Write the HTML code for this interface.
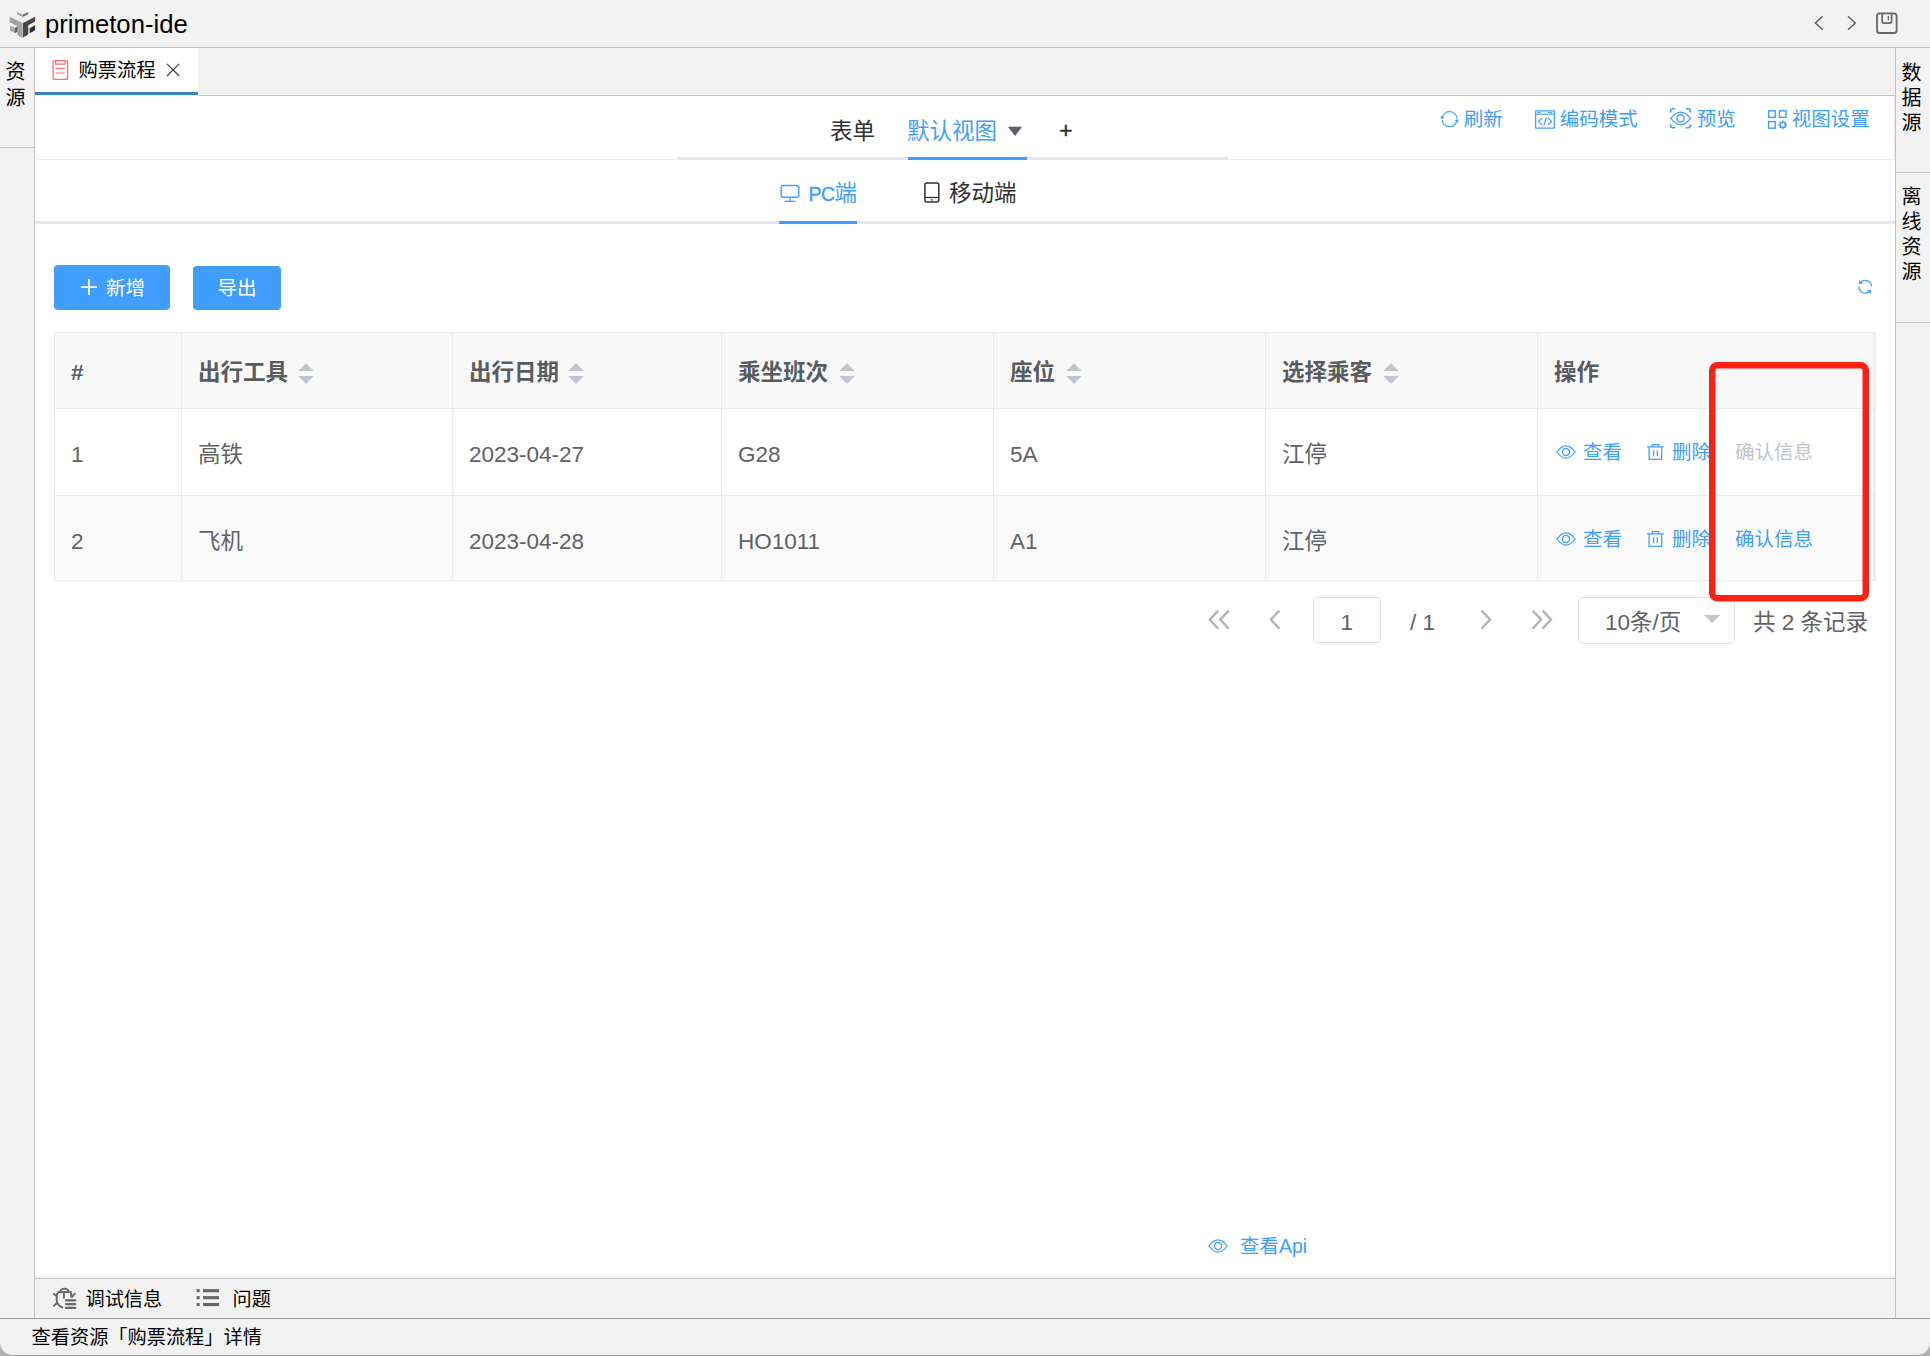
<!DOCTYPE html>
<html lang="zh-CN">
<head>
<meta charset="utf-8">
<title>primeton-ide</title>
<style>
html,body{margin:0;padding:0;}
body{width:1930px;height:1356px;overflow:hidden;background:#f2f2f2;font-family:"Liberation Sans","Noto Sans CJK SC",sans-serif;color:#000;}
#app{position:relative;width:1930px;height:1356px;overflow:hidden;background:#f2f2f2;}
.a{position:absolute;}
.t{position:absolute;white-space:nowrap;line-height:1;}
.ln{position:absolute;background:#c9c9c9;}
.blue{color:#409eff;}
svg{position:absolute;overflow:visible;}
/* table */
.cell{position:absolute;white-space:nowrap;line-height:1;font-size:22.5px;color:#606266;}
.hd{font-weight:bold;color:#595b5f;}
</style>
</head>
<body>
<div id="app">

<!-- ===== title bar ===== -->
<div class="ln" style="left:0;top:47px;width:1930px;height:1px;background:#c2c2c2"></div>
<div class="t" style="left:45px;top:11.7px;font-size:25.7px;color:#000;">primeton-ide</div>

<!-- ===== left sidebar ===== -->
<div class="ln" style="left:34px;top:48px;width:1px;height:1270px;background:#c2c2c2"></div>
<div class="t" style="left:5.6px;top:60px;font-size:20px;line-height:25.5px;width:20px;white-space:normal;">资源</div>
<div class="ln" style="left:0;top:147px;width:34px;height:1px;background:#c8c8c8"></div>

<!-- ===== right sidebar ===== -->
<div class="ln" style="left:1895px;top:48px;width:1px;height:1270px;background:#c2c2c2"></div>
<div class="t" style="left:1901.4px;top:60.5px;font-size:20px;line-height:25px;width:20px;white-space:normal;">数据源</div>
<div class="ln" style="left:1896px;top:172px;width:34px;height:1px;background:#c8c8c8"></div>
<div class="t" style="left:1901.4px;top:184.5px;font-size:20px;line-height:25px;width:20px;white-space:normal;">离线资源</div>
<div class="ln" style="left:1896px;top:322px;width:34px;height:1px;background:#c8c8c8"></div>

<!-- ===== editor tab strip ===== -->
<div class="a" style="left:35px;top:48px;width:163px;height:44px;background:#fff"></div>
<div class="a" style="left:35px;top:92px;width:163px;height:3px;background:#3b7fc9"></div>
<div class="ln" style="left:198px;top:95px;width:1697px;height:1px;background:#c6c6c6"></div>
<div class="t" style="left:78.4px;top:60.8px;font-size:19.3px;">购票流程</div>

<!-- ===== main white area ===== -->
<div class="a" id="main" style="left:35px;top:96px;width:1860px;height:1180px;background:#fff"></div>

<div class="a" style="left:35px;top:159px;width:1860px;height:1px;background:#f7e9ec"></div>
<div class="a" style="left:1894px;top:96px;width:1px;height:63px;background:#f7e9ec"></div>
<!-- view tabs -->
<div class="t" style="left:830px;top:120.5px;font-size:22.5px;color:#303133;">表单</div>
<div class="t blue" style="left:907px;top:120.5px;font-size:22.5px;">默认视图</div>
<div class="t" style="left:1059.3px;top:120.2px;font-size:22.5px;color:#303133;-webkit-text-stroke:0.45px #303133;">+</div>
<div class="a" style="left:677px;top:157px;width:551px;height:3px;background:#e4e7ed"></div>
<div class="a" style="left:908px;top:157px;width:119px;height:3px;background:#409eff"></div>

<!-- right toolbar -->
<div class="t blue" style="left:1463.7px;top:110.3px;font-size:19.5px;">刷新</div>
<div class="t blue" style="left:1559.7px;top:110.3px;font-size:19.5px;">编码模式</div>
<div class="t blue" style="left:1696.7px;top:110.3px;font-size:19.5px;">预览</div>
<div class="t blue" style="left:1791.8px;top:110.3px;font-size:19.5px;">视图设置</div>

<!-- device tabs -->
<div class="t blue" style="left:808.5px;top:183px;font-size:22.5px;"><span style="font-size:19.5px;letter-spacing:-0.6px;-webkit-text-stroke:0.35px #409eff">PC</span>端</div>
<div class="t" style="left:949px;top:183px;font-size:22.5px;color:#303133;">移动端</div>
<div class="a" style="left:35px;top:221px;width:1860px;height:3px;background:#e4e7ed"></div>
<div class="a" style="left:779px;top:221px;width:78px;height:3px;background:#409eff"></div>

<!-- buttons -->
<div class="a" style="left:54px;top:265px;width:116px;height:45px;background:#409eff;border-radius:4px"></div>
<div class="t" style="left:106px;top:278.7px;font-size:19.5px;color:#fff;">新增</div>
<div class="a" style="left:193px;top:266px;width:88px;height:44px;background:#409eff;border-radius:4px"></div>
<div class="t" style="left:217.600px;top:278.7px;font-size:19.5px;color:#fff;">导出</div>

<!-- table -->
<div class="a" style="left:54px;top:332px;width:1822px;height:77px;background:#f8f8f9"></div>
<div class="a" style="left:54px;top:409px;width:1822px;height:86px;background:#fff"></div>
<div class="a" style="left:54px;top:496px;width:1822px;height:85px;background:#fafafa"></div>
<div class="a" style="left:1873px;top:332px;width:3px;height:249px;background:#eeeff1"></div>
<div class="a" style="left:54px;top:332px;width:1822px;height:1px;background:#e8eaec"></div>
<div class="a" style="left:54px;top:408px;width:1822px;height:1px;background:#e8eaec"></div>
<div class="a" style="left:54px;top:495px;width:1822px;height:1px;background:#e8eaec"></div>
<div class="a" style="left:54px;top:580px;width:1822px;height:1px;background:#e8eaec"></div>
<div class="a" style="left:54px;top:332px;width:1px;height:249px;background:#e8eaec"></div>
<div class="a" style="left:181px;top:332px;width:1px;height:249px;background:#e8eaec"></div>
<div class="a" style="left:452px;top:332px;width:1px;height:249px;background:#e8eaec"></div>
<div class="a" style="left:721px;top:332px;width:1px;height:249px;background:#e8eaec"></div>
<div class="a" style="left:993px;top:332px;width:1px;height:249px;background:#e8eaec"></div>
<div class="a" style="left:1265px;top:332px;width:1px;height:249px;background:#e8eaec"></div>
<div class="a" style="left:1537px;top:332px;width:1px;height:249px;background:#e8eaec"></div>
<div class="cell hd" style="left:71px;top:362px;">#</div>
<div class="cell hd" style="left:198px;top:362px;">出行工具</div>
<div class="cell hd" style="left:469px;top:362px;">出行日期</div>
<div class="cell hd" style="left:738px;top:362px;">乘坐班次</div>
<div class="cell hd" style="left:1010px;top:362px;">座位</div>
<div class="cell hd" style="left:1282px;top:362px;">选择乘客</div>
<div class="cell hd" style="left:1554px;top:362px;">操作</div>
<svg style="left:298px;top:363px" width="16" height="22" viewBox="0 0 16 22"><path d="M0.2 7.9 L8 0.3 L15.800 7.9 Z M0.2 13.1 L15.800 13.1 L8 20.900 Z" fill="#c0c4cc"/></svg>
<svg style="left:568px;top:363px" width="16" height="22" viewBox="0 0 16 22"><path d="M0.2 7.9 L8 0.3 L15.800 7.9 Z M0.2 13.1 L15.800 13.1 L8 20.900 Z" fill="#c0c4cc"/></svg>
<svg style="left:839px;top:363px" width="16" height="22" viewBox="0 0 16 22"><path d="M0.2 7.9 L8 0.3 L15.800 7.9 Z M0.2 13.1 L15.800 13.1 L8 20.900 Z" fill="#c0c4cc"/></svg>
<svg style="left:1066px;top:363px" width="16" height="22" viewBox="0 0 16 22"><path d="M0.2 7.9 L8 0.3 L15.800 7.9 Z M0.2 13.1 L15.800 13.1 L8 20.900 Z" fill="#c0c4cc"/></svg>
<svg style="left:1383px;top:363px" width="16" height="22" viewBox="0 0 16 22"><path d="M0.2 7.9 L8 0.3 L15.800 7.9 Z M0.2 13.1 L15.800 13.1 L8 20.900 Z" fill="#c0c4cc"/></svg>
<div class="cell" style="left:71px;top:443.7px;">1</div>
<div class="cell" style="left:198px;top:443.7px;">高铁</div>
<div class="cell" style="left:469px;top:443.7px;">2023-04-27</div>
<div class="cell" style="left:738px;top:443.7px;">G28</div>
<div class="cell" style="left:1010px;top:443.7px;">5A</div>
<div class="cell" style="left:1282px;top:443.7px;">江停</div>
<div class="cell" style="left:71px;top:530.7px;">2</div>
<div class="cell" style="left:198px;top:530.7px;">飞机</div>
<div class="cell" style="left:469px;top:530.7px;">2023-04-28</div>
<div class="cell" style="left:738px;top:530.7px;">HO1011</div>
<div class="cell" style="left:1010px;top:530.7px;">A1</div>
<div class="cell" style="left:1282px;top:530.7px;">江停</div>
<!-- actions -->
<div class="t blue" style="left:1583px;top:443.2px;font-size:19.5px;">查看</div>
<div class="t blue" style="left:1672px;top:443.2px;font-size:19.5px;">删除</div>
<div class="t" style="left:1735px;top:443.2px;font-size:19.5px;color:#c0c4cc;">确认信息</div>
<div class="t blue" style="left:1583px;top:530.2px;font-size:19.5px;">查看</div>
<div class="t blue" style="left:1672px;top:530.2px;font-size:19.5px;">删除</div>
<div class="t blue" style="left:1735px;top:530.2px;font-size:19.5px;">确认信息</div>


<!-- pager -->
<div class="a" style="left:1313px;top:597px;width:66px;height:44px;border:1px solid #dcdfe6;border-radius:5px;background:#fff"></div>
<div class="t" style="left:1340.6px;top:612px;font-size:22.5px;color:#606266;">1</div>
<div class="t" style="left:1410px;top:612px;font-size:22.5px;color:#606266;">/ 1</div>
<div class="a" style="left:1578px;top:596.5px;width:155px;height:45.5px;border:1px solid #dcdfe6;border-radius:6px;background:#fff"></div>
<div class="t" style="left:1605px;top:611.5px;font-size:22.5px;color:#606266;">10条/页</div>
<div class="t" style="left:1753px;top:611.5px;font-size:22.5px;color:#606266;">共 2 条记录</div>


<!-- view api -->
<div class="t blue" style="left:1240px;top:1237px;font-size:19.5px;">查看Api</div>

<!-- ===== bottom panel ===== -->
<div class="ln" style="left:35px;top:1278px;width:1860px;height:1px;background:#c4c4c4"></div>
<div class="t" style="left:85.5px;top:1289.9px;font-size:19.2px;">调试信息</div>
<div class="t" style="left:232.6px;top:1289.9px;font-size:19.2px;">问题</div>
<div class="a" style="left:0;top:1336px;width:1930px;height:20px;background:linear-gradient(to right,#b2b2b2 0,#b2b2b2 8px,#9c9c9c 16px,#9c9c9c 1914px,#b2b2b2 1922px,#b2b2b2 100%)"></div>
<div class="a" style="left:0;top:1319px;width:1930px;height:36.2px;background:#f2f2f2;border-radius:0 0 13px 13px"></div>
<div class="ln" style="left:0;top:1318px;width:1930px;height:1.2px;background:#9e9e9e"></div>
<div class="t" style="left:31.6px;top:1328.2px;font-size:19.2px;">查看资源「购票流程」详情</div>

<!-- ===== icons: title bar ===== -->
<svg style="left:0;top:0" width="60" height="48" viewBox="0 0 1695 1356">
<polygon points="630,262 1000,462 640,642 270,472" fill="#efefef"/>
<polygon points="480,338 640,418 640,482 480,400" fill="#a9a9a9"/>
<polygon points="640,418 792,338 792,400 640,482" fill="#6a6a6a"/>
<polygon points="275,475 640,650 640,1070 490,990 490,740 275,630" fill="#a3a3a3"/>
<polygon points="650,650 992,470 992,610 790,720 790,980 650,1062" fill="#474747"/>
<polygon points="280,718 350,690 490,750 420,790" fill="#ededed"/>
<polygon points="280,718 420,790 420,940 280,860" fill="#a6a6a6"/>
<polygon points="420,790 490,752 490,900 420,940" fill="#5e5e5e"/>
<polygon points="790,760 850,790 850,930 790,962" fill="#acacac"/>
<polygon points="850,790 992,710 992,858 850,930" fill="#2f2f2f"/>
</svg>
<svg style="left:1800px;top:0" width="130" height="48" viewBox="1800 0 130 48" fill="none" stroke-linecap="butt" stroke-linejoin="miter">
<path d="M1822.6 16.2 L1815.3 23 L1822.6 29.8" stroke="#555" stroke-width="1.3"/>
<path d="M1848 16.2 L1855.3 23 L1848 29.8" stroke="#555" stroke-width="1.3"/>
<rect x="1877" y="13.4" width="19.6" height="19.6" rx="2.6" stroke="#666" stroke-width="1.8"/>
<path d="M1882.2 13.4 V21 Q1882.2 23.2 1884.4 23.2 H1889.4 Q1891.6 23.2 1891.6 21 V13.4" stroke="#666" stroke-width="1.7"/>
<path d="M1888.3 15.8 V20.2" stroke="#666" stroke-width="1.3"/>
</svg>
<!-- tab icon + close -->
<svg style="left:48px;top:56px" width="140" height="30" viewBox="48 56 140 30" fill="none">
<rect x="53" y="60.6" width="14.6" height="18.8" rx="2" stroke="#f87070" stroke-width="1.3"/>
<path d="M55.6 60.6 V64.2 H65 V60.6" stroke="#f87070" stroke-width="1.2"/>
<path d="M56 68.4 H64.8 M56 73 H64.8" stroke="#f87070" stroke-width="1.2"/>
<path d="M167 63.8 L179.2 76 M179.2 63.8 L167 76" stroke="#444" stroke-width="1.2"/>
</svg>
<!-- ===== icons: toolbar ===== -->
<svg style="left:1430px;top:100px" width="460" height="40" viewBox="1430 100 460 40" fill="none" stroke="#409eff" stroke-width="1.3">
<!-- refresh -->
<path d="M1442.39 117.13 A7.5 7.5 0 0 1 1457.03 118.16"/>
<path d="M1456.81 121.27 A7.5 7.5 0 0 1 1442.17 120.24"/>
<path d="M1441.75 119.6 L1440.2 116.3 L1444.6 117.5 Z" fill="#409eff" stroke="none"/>
<path d="M1457.45 118.8 L1459 122.1 L1454.6 120.9 Z" fill="#409eff" stroke="none"/>
<!-- code -->
<rect x="1535.6" y="110.8" width="18.8" height="17.4" rx="0.5"/>
<path d="M1535.6 114.2 H1554.4" stroke-width="1.1"/>
<path d="M1537.4 112.5 H1540.6 M1548 112.5 H1552.4" stroke-width="1"/>
<path d="M1542 118 L1538.4 121.4 L1542 124.8 M1548 118 L1551.6 121.4 L1548 124.8 M1546.4 117.2 L1543.8 125.6" stroke-width="1.2"/>
<!-- preview -->
<path d="M1670.6 112.4 V111 Q1670.6 108.8 1672.8 108.8 H1675.2 M1685.800 108.8 H1688.2 Q1690.4 108.8 1690.4 111 V112.4 M1690.4 124.200 V125.6 Q1690.4 127.8 1688.2 127.8 H1685.8 M1675.2 127.8 H1672.8 Q1670.6 127.8 1670.6 125.6 V124.2" stroke-width="1.6"/>
<path d="M1670.8 118.4 Q1680.5 105.8 1690.4 118.4 Q1680.5 131 1670.8 118.4 Z" stroke-width="1.3"/>
<circle cx="1680.5" cy="118.4" r="3.6" stroke-width="1.4"/>
<!-- settings -->
<rect x="1768.6" y="110.8" width="6.6" height="6.6" stroke-width="1.4"/>
<rect x="1779.4" y="110.8" width="6.6" height="6.6" stroke-width="1.4"/>
<rect x="1768.6" y="121.6" width="6.6" height="6.6" stroke-width="1.4"/>
<circle cx="1782.8" cy="124.9" r="2.6" stroke-width="1.4"/>
<path d="M1782.8 120.6 V121.8 M1782.8 128 V129.2 M1778.5 124.9 H1779.7 M1785.9 124.9 H1787.1 M1779.8 121.9 L1780.6 122.7 M1785 127.100 L1785.8 127.9 M1785.800 121.9 L1785 122.7 M1780.600 127.1 L1779.8 127.9" stroke-width="1.6"/>
</svg>
<!-- view tab caret -->
<svg style="left:1000px;top:120px" width="30" height="20" viewBox="1000 120 30 20"><path d="M1008 126.8 H1022 L1015 136 Z" fill="#5a5e66"/></svg>
<!-- device icons -->
<svg style="left:775px;top:178px" width="170" height="30" viewBox="775 178 170 30" fill="none">
<rect x="781.2" y="185.500" width="17.6" height="11.8" rx="1.8" stroke="#409eff" stroke-width="1.4"/>
<path d="M790 197.3 V201.4 M784.800 201.4 H795.4" stroke="#409eff" stroke-width="1.4"/>
<rect x="924.9" y="183.1" width="13.9" height="18.8" rx="2" stroke="#303133" stroke-width="1.5"/>
<path d="M924.9 197.500 H938.8" stroke="#303133" stroke-width="1.3"/>
<circle cx="931.8" cy="199.800" r="0.9" fill="#303133"/>
</svg>
<!-- button plus + table refresh -->
<svg style="left:78px;top:275px" width="24" height="24" viewBox="78 275 24 24"><path d="M81.100 287.100 H97 M89 279.200 V295" stroke="#fff" stroke-width="1.9" fill="none"/></svg>
<svg style="left:1852px;top:275px" width="26" height="24" viewBox="1852 275 26 24" fill="none" stroke="#409eff" stroke-width="1.3">
<path d="M1860.62 282.58 A6.3 6.3 0 0 1 1871.60 286.58"/>
<path d="M1869.52 291.48 A6.3 6.3 0 0 1 1859.00 286.58"/>
<path d="M1859.100 280.100 V283.900 H1862.900 Z" fill="#409eff" stroke="none"/>
<path d="M1867.200 290.200 L1871 289.700 L1870.900 293.900 Z" fill="#409eff" stroke="none"/>
</svg>
<!-- ===== action icons ===== -->
<svg style="left:1553.6px;top:441.7px" width="24" height="20" viewBox="-12 -10 24 20" fill="none" stroke="#409eff" stroke-width="1.25"><path d="M-9 0 Q0 -12.200 9 0 Q0 12.200 -9 0 Z"/><circle cx="0" cy="0" r="3.6"/></svg>
<svg style="left:1645.1px;top:442px" width="22" height="22" viewBox="-2 -2 22 22" fill="none" stroke="#409eff" stroke-width="1.25"><path d="M0 2.800 H16.800 M5.300 2.800 V0.600 H11.700 V2.800 M2.100 2.800 V15.400 H14.700 V2.800 M6.600 6.200 V12.200 M10.300 6.200 V12.200"/></svg>
<svg style="left:1553.6px;top:528.7px" width="24" height="20" viewBox="-12 -10 24 20" fill="none" stroke="#409eff" stroke-width="1.25"><path d="M-9 0 Q0 -12.200 9 0 Q0 12.200 -9 0 Z"/><circle cx="0" cy="0" r="3.6"/></svg>
<svg style="left:1645.1px;top:529px" width="22" height="22" viewBox="-2 -2 22 22" fill="none" stroke="#409eff" stroke-width="1.25"><path d="M0 2.800 H16.800 M5.300 2.800 V0.600 H11.700 V2.800 M2.100 2.800 V15.400 H14.700 V2.800 M6.600 6.200 V12.200 M10.300 6.200 V12.200"/></svg>
<svg style="left:1205.5px;top:1235.8px" width="24" height="20" viewBox="-12 -10 24 20" fill="none" stroke="#409eff" stroke-width="1.25"><path d="M-9 0 Q0 -12.200 9 0 Q0 12.200 -9 0 Z"/><circle cx="0" cy="0" r="3.6"/></svg>
<svg style="left:1200px;top:600px" width="540" height="40" viewBox="1200 600 540 40" fill="none" stroke="#b4b4b4" stroke-width="2.300"><path d="M1218.300 610.600 L1209.700 619.600 L1218.300 628.600 M1228.800 610.600 L1220.200 619.600 L1228.800 628.600"/><path d="M1279.400 610.600 L1270.800 619.600 L1279.400 628.600"/><path d="M1481.500 610.600 L1490.100 619.600 L1481.500 628.600"/><path d="M1532.600 610.600 L1541.200 619.600 L1532.600 628.600 M1542.500 610.600 L1551.100 619.600 L1542.500 628.600"/><path d="M1704.100 614.900 H1720.200 L1712.150 623.300 Z" fill="#c0c4cc" stroke="none"/></svg>
<svg style="left:45px;top:1280px" width="50" height="36" viewBox="0 0 1883 1356" fill="none" stroke="#666" stroke-width="72" stroke-linecap="butt"><path d="M575 440 Q590 325 730 325 Q870 325 890 440"/><path d="M480 455 H1000"/><path d="M490 470 Q440 520 440 640 V760 Q450 960 680 1045"/><path d="M985 470 V660"/><path d="M712 470 V700"/><path d="M310 505 L440 600 M310 995 L450 865 M1135 495 L1010 650"/><path d="M790 765 H1140 M790 905 H1140 M790 1050 H1140" stroke-width="84" stroke-linecap="round"/></svg>
<svg style="left:190px;top:1285px" width="36" height="26" viewBox="190 1285 36 26" fill="#666"><rect x="196.600" y="1289.100" width="3" height="3.100"/><rect x="203" y="1289.100" width="16" height="3.100"/><rect x="196.600" y="1296.100" width="3" height="3.100"/><rect x="203" y="1296.100" width="16" height="3.100"/><rect x="196.600" y="1303" width="3" height="3.100"/><rect x="203" y="1303" width="16" height="3.100"/></svg>
<!-- red annotation -->
<svg style="left:0;top:0" width="1930" height="1356"><rect x="1712.25" y="365.25" width="153.5" height="233" rx="5" ry="5" fill="none" stroke="#ff2014" stroke-width="6.5"/></svg>
</div>
</body>
</html>
